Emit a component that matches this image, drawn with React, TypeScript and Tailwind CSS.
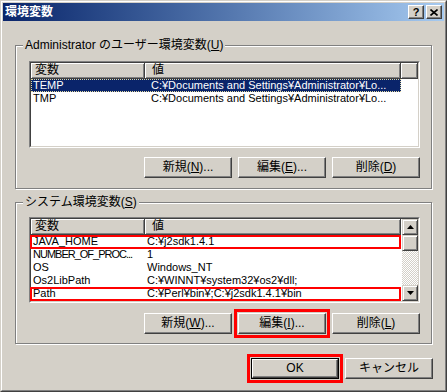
import React from "react";

type Row = { name: string; value: string; sel?: boolean; mark?: boolean; tight?: boolean };

const userVars: Row[] = [
  { name: "TEMP", value: "C:¥Documents and Settings¥Administrator¥Lo...", sel: true },
  { name: "TMP", value: "C:¥Documents and Settings¥Administrator¥Lo..." },
];

const sysVars: Row[] = [
  { name: "JAVA_HOME", value: "C:¥j2sdk1.4.1", mark: true },
  { name: "NUMBER_OF_PROC...", value: "1", tight: true },
  { name: "OS", value: "Windows_NT" },
  { name: "Os2LibPath", value: "C:¥WINNT¥system32¥os2¥dll;" },
  { name: "Path", value: "C:¥Perl¥bin¥;C:¥j2sdk1.4.1¥bin", mark: true },
];

function Btn({ children, marked, isDefault }: { children: React.ReactNode; marked?: boolean; isDefault?: boolean }) {
  const inner = isDefault ? (
    <div className="border border-black">
      <div className="flex h-[19px] w-[86px] items-center justify-center border border-t-white border-l-white border-r-[#404040] border-b-[#404040] bg-[#d4d0c8] shadow-[inset_-1px_-1px_#808080]">
        {children}
      </div>
    </div>
  ) : (
    <div className="flex h-[21px] w-[88px] items-center justify-center border border-t-white border-l-white border-r-[#404040] border-b-[#404040] bg-[#d4d0c8] shadow-[inset_-1px_-1px_#808080]">
      {children}
    </div>
  );
  return (
    <div className="relative">
      {inner}
      {marked && <span className="pointer-events-none absolute -inset-[4px] border-[3px] border-[#ff0000]" />}
    </div>
  );
}

function Arrow({ up }: { up?: boolean }) {
  return (
    <div className="flex h-[16px] w-[16px] items-center justify-center border border-t-[#d4d0c8] border-l-[#d4d0c8] border-r-[#404040] border-b-[#404040] bg-[#d4d0c8] shadow-[inset_1px_1px_#fff,inset_-1px_-1px_#808080]">
      <svg width="7" height="4" viewBox="0 0 7 4">
        {up ? <path d="M3.5 0L7 4H0z" fill="#000" /> : <path d="M0 0h7L3.5 4z" fill="#000" />}
      </svg>
    </div>
  );
}

function HeaderCell({ children, className }: { children?: React.ReactNode; className: string }) {
  return (
    <div className={"h-[16px] border-r border-b border-[#404040] bg-[#d4d0c8] leading-[14px] shadow-[inset_1px_1px_#fff,inset_-1px_-1px_#808080] " + className}>
      {children}
    </div>
  );
}

function ListView({ rows, scroll, valuePad }: { rows: Row[]; scroll?: boolean; valuePad: string }) {
  return (
    <div className="border border-t-[#808080] border-l-[#808080] border-r-white border-b-white">
      <div className={"flex border border-t-[#404040] border-l-[#404040] border-r-[#d4d0c8] border-b-[#d4d0c8] bg-white " + (scroll ? "h-[84px]" : "h-[85px]")}>
        <div className="flex flex-1 flex-col">
          <div className="flex">
            <HeaderCell className="w-[114px] pl-[4px]">変数</HeaderCell>
            <HeaderCell className="w-[256px] pl-[7px]">値</HeaderCell>
            {!scroll && <HeaderCell className="flex-1" />}
          </div>
          {rows.map((r) => (
            <div
              key={r.name}
              className={
                "relative flex h-[13px] w-[370px] whitespace-nowrap text-[11px] leading-[13px] " +
                (r.sel ? "bg-[#0a246a] text-white outline-1 outline-dotted outline-[#e0d8a0] -outline-offset-1" : "")
              }
            >
              <div className={"w-[114px] overflow-hidden pl-[2px] " + (r.tight ? "tracking-[-1px]" : "")}>{r.name}</div>
              <div className={"w-[256px] overflow-hidden " + valuePad}>{r.value}</div>
              {r.mark && <span className="pointer-events-none absolute -left-px right-0 top-0 -bottom-px border-2 border-[#ff0000]" />}
            </div>
          ))}
        </div>
        {scroll && (
          <div className="flex w-[16px] flex-col">
            <Arrow up />
            <div className="h-[16px] border border-t-[#d4d0c8] border-l-[#d4d0c8] border-r-[#404040] border-b-[#404040] bg-[#d4d0c8] shadow-[inset_1px_1px_#fff,inset_-1px_-1px_#808080]" />
            <div className="flex-1 bg-[image:repeating-conic-gradient(#ffffff_0_25%,#d4d0c8_0_50%)] bg-[length:2px_2px]" />
            <Arrow />
          </div>
        )}
      </div>
    </div>
  );
}

function Group({ label, children, className }: { label: React.ReactNode; children: React.ReactNode; className: string }) {
  return (
    <div className={"relative w-[417px] border border-[#808080] shadow-[inset_1px_1px_#fff,1px_1px_#fff] " + className}>
      <div className="absolute -top-[8px] left-[7px] bg-[#d4d0c8] px-[2px] leading-[14px]">{label}</div>
      {children}
    </div>
  );
}

const U = ({ c }: { c: string }) => <span className="underline underline-offset-1">{c}</span>;

export default function App() {
  return (
    <div className="h-[392px] w-[447px] border border-t-[#d4d0c8] border-l-[#d4d0c8] border-r-[#404040] border-b-[#404040] bg-[#d4d0c8] font-['Liberation_Sans','Noto_Sans_CJK_JP',sans-serif] text-[12px] leading-[13px] text-black">
      <div className="h-full border border-t-white border-l-white border-r-[#808080] border-b-[#808080] p-px">
        <div className="flex h-[18px] items-center justify-between bg-linear-to-r from-[#0a246a] to-[#a6caf0] pl-[2px] pr-[2px]">
          <span className="font-bold text-white">環境変数</span>
          <div className="flex gap-[2px]">
            <div className="flex h-[14px] w-[16px] items-center justify-center border border-t-white border-l-white border-r-[#404040] border-b-[#404040] bg-[#d4d0c8] text-[11px] leading-none font-bold shadow-[inset_-1px_-1px_#808080]">
              ?
            </div>
            <div className="flex h-[14px] w-[16px] items-center justify-center border border-t-white border-l-white border-r-[#404040] border-b-[#404040] bg-[#d4d0c8] shadow-[inset_-1px_-1px_#808080]">
              <svg width="8" height="7" viewBox="0 0 8 7">
                <path d="M0.5 0.5L7.5 6.5M7.5 0.5L0.5 6.5" stroke="#000" strokeWidth="1.6" />
              </svg>
            </div>
          </div>
        </div>

        <div className="flex flex-col pl-[12px] pt-[24px]">
          <Group label={<>Administrator のユーザー環境変数(<U c="U" />)</>} className="h-[144px] pl-[13px] pt-[15px]">
            <div className="w-[391px]">
              <ListView rows={userVars} valuePad="pl-[6px]" />
              <div className="mt-[9px] flex justify-end gap-[6px]">
                <Btn>新規(<U c="N" />)...</Btn>
                <Btn>編集(<U c="E" />)...</Btn>
                <Btn>削除(<U c="D" />)</Btn>
              </div>
            </div>
          </Group>

          <Group label={<>システム環境変数(<U c="S" />)</>} className="mt-[13px] h-[142px] pl-[13px] pt-[14px]">
            <div className="w-[391px]">
              <ListView rows={sysVars} scroll valuePad="pl-[2px]" />
              <div className="mt-[10px] flex justify-end gap-[6px]">
                <Btn>新規(<U c="W" />)...</Btn>
                <Btn marked>編集(<U c="I" />)...</Btn>
                <Btn>削除(<U c="L" />)</Btn>
              </div>
            </div>
          </Group>

          <div className="mt-[14px] flex w-[418px] justify-end gap-[6px]">
            <Btn marked isDefault>OK</Btn>
            <Btn>キャンセル</Btn>
          </div>
        </div>
      </div>
    </div>
  );
}
